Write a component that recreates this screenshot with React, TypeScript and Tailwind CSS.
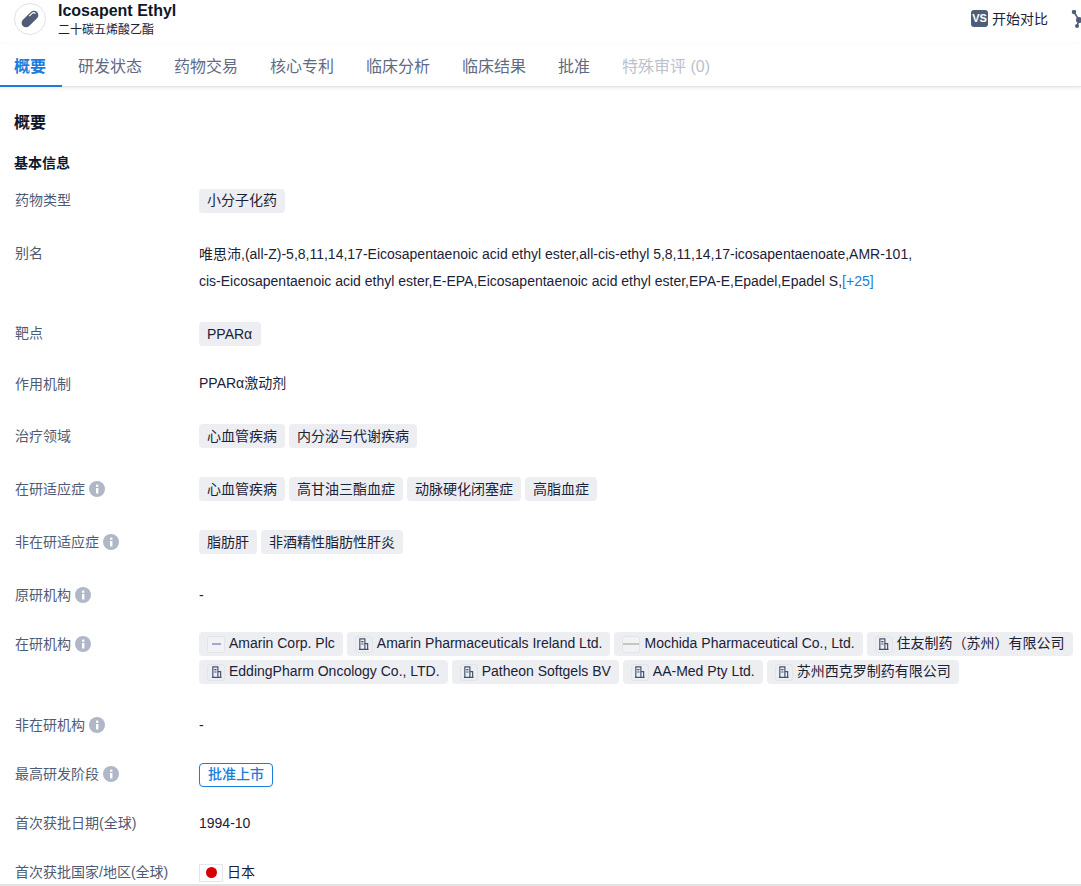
import React from "react";

const FONT = '"Liberation Sans", "Noto Sans CJK SC", sans-serif';

function Info() {
  return (
    <svg width="16" height="16" viewBox="0 0 16 16" className="ml-1 shrink-0">
      <circle cx="8" cy="8" r="8" fill="#b0b7c6" />
      <rect x="7" y="7" width="2.4" height="5.5" fill="#fff" />
      <rect x="7" y="3.6" width="2.4" height="2.2" fill="#fff" />
    </svg>
  );
}

function BuildingIcon() {
  return (
    <span className="w-[18px] h-[17px] mr-[4px] shrink-0 rounded-[3px] border border-[#e2e4ea] flex items-center justify-center">
      <svg width="11" height="12" viewBox="0 0 12 13" fill="none" stroke="#46536e" strokeWidth="1.3">
        <path d="M2 12.5V1h5.5v11.5" />
        <path d="M7.5 6h3v6.5M1 12.4h10.5" />
        <path d="M3.5 4h2.5M3.5 6.5h2.5" />
      </svg>
    </span>
  );
}

function LogoIcon({ kind }: { kind: "amarin" | "mochida" }) {
  return (
    <span className="w-[18px] h-[17px] mr-[4px] shrink-0 rounded-[3px] border border-[#e2e4ea] bg-[#f1f2f6] flex items-center justify-center">
      {kind === "amarin" ? (
        <span className="block w-[9px] h-[2px] bg-[#a5a7cc]" />
      ) : (
        <span className="block w-[16px] h-[2px] bg-[#c6c6be]" />
      )}
    </span>
  );
}

function Tag({ children, wide }: { children: React.ReactNode; wide?: boolean }) {
  return (
    <span className={`h-6 pl-2 ${wide ? "pr-[9px]" : "pr-2"} inline-flex items-center rounded-[4px] bg-[#eceef2] text-[14px] text-[#1b2235] whitespace-nowrap`}>
      {children}
    </span>
  );
}

function Org({ icon, name }: { icon: React.ReactNode; name: string }) {
  return (
    <Tag>
      {icon}
      <span className="mb-[2px]">{name}</span>
    </Tag>
  );
}

function Row({
  label,
  info,
  mt,
  children,
}: {
  label: string;
  info?: boolean;
  mt: string;
  children: React.ReactNode;
}) {
  return (
    <div className={`flex ${mt}`}>
      <div className="w-[185px] shrink-0 h-6 pl-px flex items-center text-[14px] text-[#4f5b75]">
        {label}
        {info && <Info />}
      </div>
      <div className="flex-1 min-w-0">{children}</div>
    </div>
  );
}

const tabs = ["研发状态", "药物交易", "核心专利", "临床分析", "临床结果", "批准"];

export default function App() {
  return (
    <div className="w-[1081px] h-[886px] overflow-hidden bg-white flex flex-col" style={{ fontFamily: FONT }}>
      <header className="h-[44px] shrink-0 flex pl-[14px]">
        <div className="w-8 h-8 mt-[3px] rounded-full border border-[#dfe2ea] flex items-center justify-center">
          <svg width="22" height="22" viewBox="0 0 22 22">
            <g transform="rotate(-45 11 11)">
              <rect x="1" y="6.6" width="20" height="8.8" rx="4.4" fill="#4f5d78" />
              <path d="M12.5 8.4h3.6a2.6 2.6 0 0 1 2.6 2.6" stroke="#fff" strokeWidth="1.2" fill="none" />
            </g>
          </svg>
        </div>
        <div className="ml-[12px] flex flex-col">
          <div className="h-[20px] mt-px text-[16px] font-bold leading-[20px] text-[#0f1729]">Icosapent Ethyl</div>
          <div className="h-[18px] text-[12px] leading-[18px] text-[#1b2235]">二十碳五烯酸乙酯</div>
        </div>
        <div className="ml-auto flex items-start pt-[10px] overflow-hidden">
          <span className="w-[17px] h-[17px] rounded-[3px] bg-[#4f5d78] text-white text-[11px] font-bold flex items-center justify-center mr-[4px]">
            VS
          </span>
          <span className="text-[14px] leading-[18px] text-[#1b2235]">开始对比</span>
          <svg width="10" height="20" viewBox="0 0 10 20" className="ml-[23px] shrink-0">
            <path d="M3 2L8 10L6 16" stroke="#4f5d78" strokeWidth="1.6" fill="none" />
            <g fill="#4f5d78">
              <circle cx="3" cy="2" r="2.2" />
              <circle cx="8" cy="10" r="3" />
              <circle cx="6" cy="16" r="2" />
            </g>
          </svg>
        </div>
      </header>

      <nav className="h-[43px] shrink-0 flex border-b border-[#e3e5ec] shadow-[0_1px_3px_rgba(60,70,100,0.12)] text-[16px]">
        <div className="w-[62px] pl-[14px] h-[43px] border-b-2 border-[#1a7ddb] text-[#1a7ddb] font-bold leading-[46px]">概要</div>
        {tabs.map((t) => (
          <div key={t} className="mx-4 leading-[46px] text-[#5f6b85]">{t}</div>
        ))}
        <div className="ml-4 leading-[46px] text-[#bcc1cc]">特殊审评 (0)</div>
      </nav>

      <main className="pl-[14px] flex-1 relative">
        <h2 className="mt-[25px] text-[16px] font-bold leading-[22px] text-[#0f1729]">概要</h2>
        <h3 className="mt-[19px] text-[14px] font-bold leading-[20px] text-[#0f1729]">基本信息</h3>

        <Row label="药物类型" mt="mt-[15px]"><Tag>小分子化药</Tag></Row>
        <Row label="别名" mt="mt-[29px]">
          <div className="text-[14px] leading-[28px] text-[#1b2235] -mt-[2px]">
            <div>唯思沛,(all-Z)-5,8,11,14,17-Eicosapentaenoic acid ethyl ester,all-cis-ethyl 5,8,11,14,17-icosapentaenoate,AMR-101,</div>
            <div className="-mt-px">
              cis-Eicosapentaenoic acid ethyl ester,E-EPA,Eicosapentaenoic acid ethyl ester,EPA-E,Epadel,Epadel S,
              <span className="text-[#1a7ddb]">[+25]</span>
            </div>
          </div>
        </Row>
        <Row label="靶点" mt="mt-[27px]"><Tag wide>PPARα</Tag></Row>
        <Row label="作用机制" mt="mt-[26px]">
          <div className="text-[14px] leading-[22px] text-[#1b2235]">PPARα激动剂</div>
        </Row>
        <Row label="治疗领域" mt="mt-[28px]">
          <div className="flex gap-1"><Tag>心血管疾病</Tag><Tag>内分泌与代谢疾病</Tag></div>
        </Row>
        <Row label="在研适应症" info mt="mt-[29px]">
          <div className="flex gap-1"><Tag>心血管疾病</Tag><Tag>高甘油三酯血症</Tag><Tag>动脉硬化闭塞症</Tag><Tag>高脂血症</Tag></div>
        </Row>
        <Row label="非在研适应症" info mt="mt-[29px]">
          <div className="flex gap-1"><Tag>脂肪肝</Tag><Tag>非酒精性脂肪性肝炎</Tag></div>
        </Row>
        <Row label="原研机构" info mt="mt-[29px]">
          <div className="text-[14px] leading-[24px] text-[#1b2235]">-</div>
        </Row>
        <Row label="在研机构" info mt="mt-[25px]">
          <div className="flex flex-wrap gap-1">
            <Org icon={<LogoIcon kind="amarin" />} name="Amarin Corp. Plc" />
            <Org icon={<BuildingIcon />} name="Amarin Pharmaceuticals Ireland Ltd." />
            <Org icon={<LogoIcon kind="mochida" />} name="Mochida Pharmaceutical Co., Ltd." />
            <Org icon={<BuildingIcon />} name="住友制药（苏州）有限公司" />
            <Org icon={<BuildingIcon />} name="EddingPharm Oncology Co., LTD." />
            <Org icon={<BuildingIcon />} name="Patheon Softgels BV" />
            <Org icon={<BuildingIcon />} name="AA-Med Pty Ltd." />
            <Org icon={<BuildingIcon />} name="苏州西克罗制药有限公司" />
          </div>
        </Row>
        <Row label="非在研机构" info mt="mt-[29px]">
          <div className="text-[14px] leading-[24px] text-[#1b2235]">-</div>
        </Row>
        <Row label="最高研发阶段" info mt="mt-[25px]">
          <span className="h-6 w-[74px] inline-flex items-center justify-center rounded-[4px] border border-[#1a7ddb] text-[14px] font-medium text-[#1a7ddb]">批准上市</span>
        </Row>
        <Row label="首次获批日期(全球)" mt="mt-[25px]">
          <div className="text-[14px] leading-[22px] text-[#1b2235]">1994-10</div>
        </Row>
        <Row label="首次获批国家/地区(全球)" mt="mt-[25px]">
          <div className="flex items-center h-6 text-[14px] text-[#1b2235]">
            <span className="w-6 h-[18px] mr-1 border border-[#e3e5ea] flex items-center justify-center">
              <span className="w-[11px] h-[11px] rounded-full bg-[#d50000]" />
            </span>
            日本
          </div>
        </Row>
        <div className="absolute left-[-14px] right-0 top-[797px] h-[2px] bg-[#e2e2e2]" />
      </main>
    </div>
  );
}
